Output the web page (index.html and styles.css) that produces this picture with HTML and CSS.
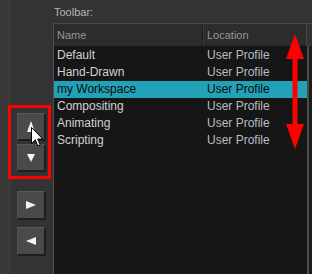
FILE: index.html
```html
<!DOCTYPE html>
<html>
<head>
<meta charset="utf-8">
<link rel="stylesheet" href="styles.css">
</head>
<body>
<div class="root">
  <div class="strip"></div>
  <div class="side">
    <div class="btn btn-up"><span class="tri tri-up"></span></div>
    <div class="btn btn-down"><span class="tri tri-down"></span></div>
    <div class="btn btn-right"><span class="tri tri-right"></span></div>
    <div class="btn btn-left"><span class="tri tri-left"></span></div>
  </div>
  <div class="main">
    <div class="label">Toolbar:</div>
    <div class="list">
      <div class="head">
        <div class="hcell hname">Name</div>
        <div class="hcell hloc">Location</div>
        <div class="hrest"></div>
      </div>
      <div class="body">
        <div class="rows">
          <div class="row"><span class="c1">Default</span><span class="c2">User Profile</span></div>
          <div class="row"><span class="c1">Hand-Drawn</span><span class="c2">User Profile</span></div>
          <div class="row sel"><span class="c1">my Workspace</span><span class="c2">User Profile</span></div>
          <div class="row"><span class="c1">Compositing</span><span class="c2">User Profile</span></div>
          <div class="row"><span class="c1">Animating</span><span class="c2">User Profile</span></div>
          <div class="row"><span class="c1">Scripting</span><span class="c2">User Profile</span></div>
        </div>
        <div class="vline"></div>
        <div class="rest"></div>
      </div>
    </div>
  </div>
</div>
<div class="redbox"></div>
<svg class="redarrow" width="22" height="116" viewBox="0 0 22 116">
  <polygon points="11,0 20,25 13.5,25 13.5,90 20,90 11,115 2,90 8.5,90 8.5,25 2,25" fill="#ff0000"/>
</svg>
<svg class="cursor" width="13" height="21" viewBox="0 0 13 21">
  <path d="M0.5,0.5 L0.5,16.5 L4.3,12.8 L6.8,18.8 L9.2,17.8 L6.7,12 L11.8,12 Z" fill="#ffffff" stroke="#000000" stroke-width="1" stroke-linejoin="round"/>
</svg>
</body>
</html>
```

FILE: styles.css
```css
html, body {
  margin: 0;
  padding: 0;
  width: 312px;
  height: 274px;
  overflow: hidden;
  background: #333333;
  font-family: "Liberation Sans", Arial, sans-serif;
}
.root {
  display: flex;
  width: 312px;
  height: 274px;
}
.strip {
  width: 11px;
  background: #393939;
  flex: none;
}
.side {
  width: 42px;
  flex: none;
  background: #333333;
  display: flex;
  flex-direction: column;
  padding-left: 6px;
  box-sizing: border-box;
  padding-top: 113px;
}
.btn {
  width: 29px;
  height: 28px;
  box-sizing: border-box;
  background: #4a4a4a;
  border-top: 1px solid #575757;
  border-left: 1px solid #555555;
  border-right: 2px solid #1e1e1e;
  border-bottom: 2px solid #1e1e1e;
  display: flex;
  align-items: center;
  justify-content: center;
}
.btn-down { margin-top: 3px; }
.btn-right { margin-top: 19px; height: 29px; }
.btn-left { margin-top: 7px; height: 29px; }
.tri {
  width: 0;
  height: 0;
  display: block;
}
.tri-up {
  border-left: 4px solid transparent;
  border-right: 4px solid transparent;
  border-bottom: 11px solid #f2f2f2;
}
.tri-down {
  border-left: 4px solid transparent;
  border-right: 4px solid transparent;
  border-top: 8px solid #f2f2f2;
}
.tri-right {
  border-top: 4px solid transparent;
  border-bottom: 4px solid transparent;
  border-left: 10px solid #f2f2f2;
}
.tri-left {
  border-top: 4px solid transparent;
  border-bottom: 4px solid transparent;
  border-right: 10px solid #f2f2f2;
}
.main {
  flex: 1;
  display: flex;
  flex-direction: column;
  min-width: 0;
}
.label {
  height: 23px;
  line-height: 24px;
  font-size: 11px;
  color: #b4b4b4;
  padding-left: 1px;
}
.list {
  flex: 1;
  display: flex;
  flex-direction: column;
  border-top: 1px solid #4a4a4a;
  border-left: 1px solid #4e4e4e;
}
.head {
  display: flex;
  height: 22px;
  background: #2c2c2c;
}
.hcell {
  font-size: 11px;
  color: #959595;
  line-height: 23px;
  padding-left: 3px;
  box-sizing: border-box;
}
.hname {
  width: 149px;
  border-right: 1px solid #1c1c1c;
}
.hloc {
  width: 104px;
  border-left: 1px solid #3c3c3c;
  border-right: 1px solid #4a4a4a;
  border-bottom: 1px solid #262626;
}
.hrest {
  flex: 1;
  background: #333333;
}
.body {
  flex: 1;
  display: flex;
  background: #161616;
}
.rows {
  width: 253px;
  padding-top: 1px;
}
.row {
  display: flex;
  height: 17px;
  line-height: 17px;
  font-size: 12px;
}
.c1 {
  width: 149px;
  padding-left: 3px;
  color: #d2d2d2;
  box-sizing: border-box;
}
.c2 {
  width: 104px;
  padding-left: 4px;
  color: #b9bdc1;
  box-sizing: border-box;
}
.row.sel {
  background: #21a2b7;
}
.row.sel .c1, .row.sel .c2 {
  color: #0b0b0b;
}
.vline {
  width: 2px;
  background: #4a4a4a;
}
.rest {
  flex: 1;
  background: #1c1c1c;
}
.redbox {
  position: absolute;
  left: 8px;
  top: 105px;
  width: 43px;
  height: 74px;
  box-sizing: border-box;
  border: 3px solid #ff0000;
}
.redarrow {
  position: absolute;
  left: 284px;
  top: 34px;
}
.cursor {
  position: absolute;
  left: 31px;
  top: 127px;
}
```
